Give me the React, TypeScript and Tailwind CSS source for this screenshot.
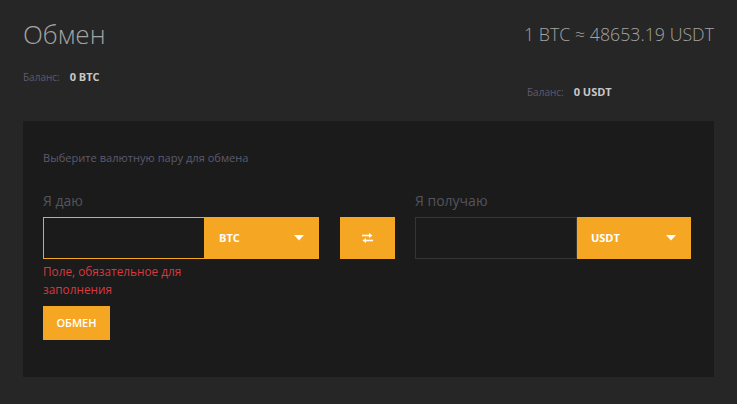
import React from 'react';

const font = { fontFamily: '"Open Sans", "Noto Sans", sans-serif' };

function Caret() {
  return (
    <svg width="10" height="6" viewBox="0 0 10 6" className="ml-auto">
      <path d="M0 0 L10 0 L5 5.5 Z" fill="#fff" />
    </svg>
  );
}

function SwapIcon() {
  return (
    <svg width="11" height="10" viewBox="0 0 11 10">
      <path d="M0 2.5 H8.5" stroke="#fff" strokeWidth="1.6" />
      <path d="M7 0 L10.5 2.5 L7 5 Z" fill="#fff" />
      <path d="M2.5 7.5 H11" stroke="#fff" strokeWidth="1.6" />
      <path d="M4 5 L0.5 7.5 L4 10 Z" fill="#fff" />
    </svg>
  );
}

function CurrencyField({ label, currency, invalid }: { label: string; currency: string; invalid?: boolean }) {
  return (
    <div className="flex flex-col">
      <div className="text-[14px] leading-[20px] text-[#55545c] mb-[6px]">{label}</div>
      <div className="flex h-[42px]">
        <div
          className={`w-[162px] h-full bg-[#1b1b1b] border ${
            invalid ? 'border-[#f5a623]' : 'border-[#353535]'
          }`}
        />
        <div className="w-[114px] h-full bg-[#f5a623] flex items-center pl-[14px] pr-[15px]">
          <span className="text-[11px] font-bold text-white">{currency}</span>
          <Caret />
        </div>
      </div>
    </div>
  );
}

function Balance({ value }: { value: string }) {
  return (
    <div className="text-[10px] leading-[14px]">
      <span className="text-[#5c5a6e]">Баланс:</span>
      <span className="ml-[10px] text-[11px] font-bold text-[#c8c8c8]">{value}</span>
    </div>
  );
}

export default function App() {
  return (
    <div className="w-[737px] h-[404px] bg-[#262626] overflow-hidden" style={font}>
      <div className="px-[23px] pt-[16px]">
        <div className="flex justify-between">
          <div>
            <h1 className="text-[26px] leading-[36px] font-light text-[#a3a3a3]">Обмен</h1>
            <div className="mt-[18px]">
              <Balance value="0 BTC" />
            </div>
          </div>
          <div className="flex flex-col items-end">
            <div className="text-[17.8px] leading-[36px] font-light text-[#a3a3a3]">1 BTC ≈ 48653.19 USDT</div>
            <div className="mt-[33px] w-[187px]">
              <Balance value="0 USDT" />
            </div>
          </div>
        </div>

        <div className="mt-[22px] h-[256px] bg-[#1b1b1b] px-[20px] pt-[29px]">
          <div className="text-[11.1px] leading-[16px] text-[#5c5a6e]">Выберите валютную пару для обмена</div>
          <div className="mt-[25px] flex items-end">
            <CurrencyField label="Я даю" currency="BTC" invalid />
            <button className="ml-[21px] w-[55px] h-[42px] bg-[#f5a623] flex items-center justify-center">
              <SwapIcon />
            </button>
            <div className="ml-[20px]">
              <CurrencyField label="Я получаю" currency="USDT" />
            </div>
          </div>
          <div className="mt-[3px] w-[165px] text-[11.8px] leading-[18px] text-[#d7393f]">
            Поле, обязательное для заполнения
          </div>
          <button className="mt-[8px] w-[67px] h-[34px] bg-[#f5a623] text-white text-[11px] font-semibold">
            ОБМЕН
          </button>
        </div>
      </div>
    </div>
  );
}
